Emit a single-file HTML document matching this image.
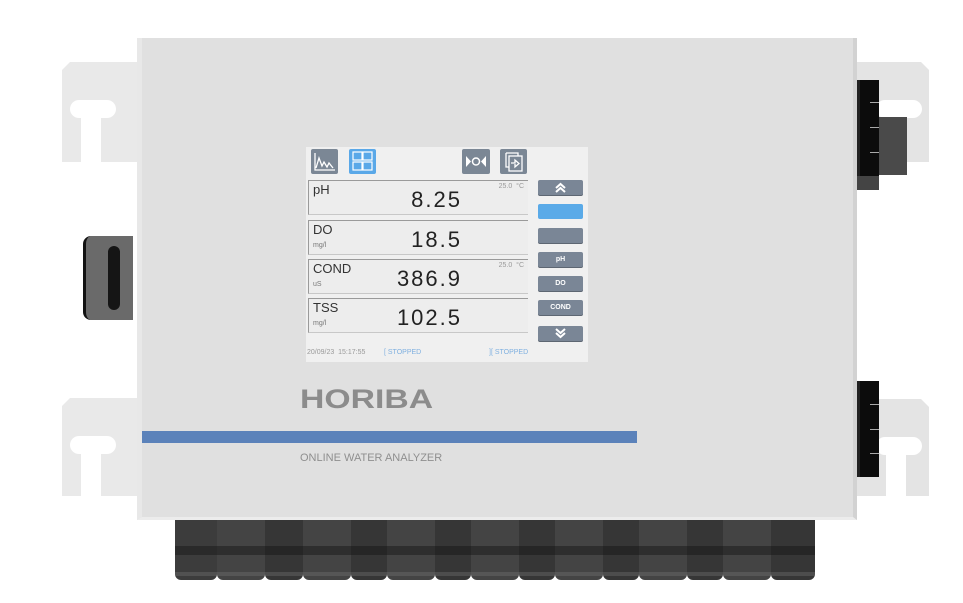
<!DOCTYPE html>
<html><head><meta charset="utf-8"><style>
*{margin:0;padding:0;box-sizing:border-box}
body{width:963px;height:603px;background:#fff;position:relative;overflow:hidden;font-family:"Liberation Sans",sans-serif}
.a{position:absolute}
.br{background:#e9e9e9}
.slot{background:#fff}
.row{position:absolute;left:308px;width:220px;height:35px;border:1px solid #9a9a9a;border-right:none;border-bottom-color:#c8c8c8;background:#ededed}
.row .n{position:absolute;left:4px;top:1px;font-size:13px;color:#333}
.row .u{position:absolute;left:4px;top:21px;font-size:7px;color:#777}
.row .v{position:absolute;right:66px;top:6px;font-size:22px;color:#222;letter-spacing:2px}
.row .t{position:absolute;right:4px;top:2px;font-size:7px;color:#999}
.bt{position:absolute;left:538px;width:45px;height:15px;background:#7a8696;border-radius:2px;color:#fff;font-size:7px;font-weight:bold;text-align:center;line-height:15px;box-shadow:0 1px 0 #5d6672}
.ic{position:absolute;top:149px;width:27px;height:25px;background:#7b8795;border-radius:2px}
.gl{position:absolute;top:520px;height:60px;background:#3c3c3c;border-radius:0 0 6px 6px}
</style></head><body>
<div class="a br" style="left:62px;top:62px;width:80px;height:100px;clip-path:polygon(8px 0,100% 0,100% 100%,0 100%,0 8px)"></div>
<div class="a slot" style="left:70px;top:100px;width:46px;height:18px;border-radius:9px"></div>
<div class="a slot" style="left:81px;top:110px;width:20px;height:52px"></div>
<div class="a br" style="left:62px;top:398px;width:80px;height:98px;clip-path:polygon(8px 0,100% 0,100% 100%,0 100%,0 8px)"></div>
<div class="a slot" style="left:70px;top:436px;width:46px;height:18px;border-radius:9px"></div>
<div class="a slot" style="left:81px;top:446px;width:20px;height:50px"></div>
<div class="a br" style="left:850px;top:62px;width:79px;height:100px;background:#e4e4e4;clip-path:polygon(0 0,calc(100% - 8px) 0,100% 8px,100% 100%,0 100%)"></div>
<div class="a slot" style="left:876px;top:100px;width:46px;height:18px;border-radius:9px"></div>
<div class="a slot" style="left:886px;top:110px;width:20px;height:52px"></div>
<div class="a br" style="left:850px;top:399px;width:79px;height:97px;background:#e4e4e4;clip-path:polygon(0 0,calc(100% - 8px) 0,100% 8px,100% 100%,0 100%)"></div>
<div class="a slot" style="left:876px;top:437px;width:46px;height:18px;border-radius:9px"></div>
<div class="a slot" style="left:886px;top:447px;width:20px;height:49px"></div>
<div class="gl" style="left:175px;width:42px"></div>
<div class="gl" style="left:217px;width:48px;background:#444"></div>
<div class="gl" style="left:265px;width:38px;background:#363636"></div>
<div class="gl" style="left:303px;width:48px;background:#444"></div>
<div class="gl" style="left:351px;width:36px;background:#363636"></div>
<div class="gl" style="left:387px;width:48px;background:#444"></div>
<div class="gl" style="left:435px;width:36px;background:#363636"></div>
<div class="gl" style="left:471px;width:48px;background:#444"></div>
<div class="gl" style="left:519px;width:36px;background:#363636"></div>
<div class="gl" style="left:555px;width:48px;background:#444"></div>
<div class="gl" style="left:603px;width:36px;background:#363636"></div>
<div class="gl" style="left:639px;width:48px;background:#444"></div>
<div class="gl" style="left:687px;width:36px;background:#363636"></div>
<div class="gl" style="left:723px;width:48px;background:#444"></div>
<div class="gl" style="left:771px;width:44px;background:#363636"></div>
<div class="a" style="left:175px;top:546px;width:640px;height:9px;background:rgba(20,20,20,.45)"></div>
<div class="a" style="left:175px;top:572px;width:640px;height:4px;background:rgba(120,120,120,.35)"></div>
<div class="a" style="left:137px;top:38px;width:720px;height:482px;background:#e0e0e0;border-left:5px solid #e8e8e8;border-right:4px solid #d2d2d2;border-bottom:3px solid #ececec"></div>
<div class="a" style="left:83px;top:236px;width:50px;height:84px;background:#6a6a6a;border-radius:8px 0 0 8px;border-left:3px solid #111"></div>
<div class="a" style="left:108px;top:246px;width:12px;height:64px;background:#151515;border-radius:6px"></div>
<div class="a" style="left:857px;top:80px;width:22px;height:110px;background:#444"></div>
<div class="a" style="left:857px;top:80px;width:22px;height:96px;background:#0c0c0c;border-left:3px solid #222"></div>
<div class="a" style="left:879px;top:117px;width:28px;height:58px;background:#4a4a4a"></div>
<div class="a" style="left:870px;top:102px;width:9px;height:1px;background:#aaa"></div>
<div class="a" style="left:870px;top:127px;width:9px;height:1px;background:#aaa"></div>
<div class="a" style="left:870px;top:152px;width:9px;height:1px;background:#aaa"></div>
<div class="a" style="left:857px;top:381px;width:22px;height:96px;background:#0c0c0c;border-left:3px solid #222"></div>
<div class="a" style="left:870px;top:404px;width:9px;height:1px;background:#aaa"></div>
<div class="a" style="left:870px;top:429px;width:9px;height:1px;background:#aaa"></div>
<div class="a" style="left:870px;top:453px;width:9px;height:1px;background:#aaa"></div>
<div class="a" style="left:306px;top:147px;width:282px;height:215px;background:#f0f0f0"></div>
<div class="ic" style="left:311px"><svg width="27" height="25"><path d="M4 4V21H24M5 19L8 9L11 17L13 13L16 18L18 14L22 19" stroke="#fff" stroke-width="1.3" fill="none"/></svg></div>
<div class="ic" style="left:349px;background:#5aa8e8"><svg width="27" height="25"><g stroke="#fff" fill="none" stroke-width="1.2"><rect x="4" y="3" width="9" height="8"/><rect x="14" y="3" width="9" height="8"/><rect x="4" y="13" width="9" height="8"/><rect x="14" y="13" width="9" height="8"/></g></svg></div>
<div class="ic" style="left:462px;width:28px"><svg width="28" height="25"><path d="M4 7L9 12.5L4 18Z M24 7L19 12.5L24 18Z" fill="#fff"/><circle cx="14" cy="12.5" r="3.5" stroke="#fff" stroke-width="1.5" fill="none"/></svg></div>
<div class="ic" style="left:500px"><svg width="27" height="25"><g stroke="#fff" stroke-width="1.3" fill="none"><path d="M6 4H18V7M6 4V18H9"/><rect x="9" y="7" width="13" height="15"/><path d="M11 14H15V11L19 14.5L15 18V15"/></g></svg></div>
<div class="row" style="top:180px"><span class="n">pH</span><span class="v">8.25</span><span class="t">25.0 &nbsp;°C</span></div>
<div class="row" style="top:220px"><span class="n">DO</span><span class="u">mg/l</span><span class="v">18.5</span></div>
<div class="row" style="top:259px"><span class="n">COND</span><span class="u">uS</span><span class="v">386.9</span><span class="t">25.0 &nbsp;°C</span></div>
<div class="row" style="top:298px"><span class="n">TSS</span><span class="u">mg/l</span><span class="v">102.5</span></div>
<div class="bt" style="top:180px"><svg width="45" height="15"><path d="M18 8L22.5 4L27 8M18 12L22.5 8L27 12" stroke="#fff" stroke-width="2" fill="none"/></svg></div>
<div class="bt" style="top:204px;background:#5aaae8;box-shadow:none"></div>
<div class="bt" style="top:228px"></div>
<div class="bt" style="top:252px">pH</div>
<div class="bt" style="top:276px">DO</div>
<div class="bt" style="top:300px">COND</div>
<div class="bt" style="top:326px"><svg width="45" height="15"><path d="M18 3L22.5 7L27 3M18 7L22.5 11L27 7" stroke="#fff" stroke-width="2" fill="none"/></svg></div>
<div class="a" style="left:307px;top:349px;font-size:7px;color:#999">20/09/23 &nbsp;15:17:55</div>
<div class="a" style="left:384px;top:349px;font-size:7px;color:#7fb0e0">[ STOPPED</div>
<div class="a" style="left:489px;top:349px;font-size:7px;color:#7fb0e0">][ STOPPED</div>
<div class="a" style="left:300px;top:384px;font-size:27px;font-weight:bold;color:#8c8c8c;transform:scaleX(1.25);transform-origin:0 0">HORIBA</div>
<div class="a" style="left:142px;top:431px;width:495px;height:12px;background:#5b82ba"></div>
<div class="a" style="left:300px;top:452px;font-size:11px;color:#8f8f8f">ONLINE WATER ANALYZER</div>
</body></html>
